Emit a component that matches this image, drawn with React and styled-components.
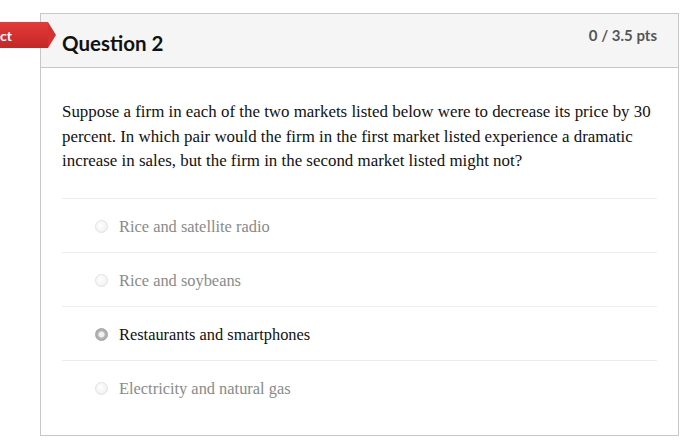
import styled, { createGlobalStyle } from "styled-components";

const Global = createGlobalStyle`
  body {
    margin: 0;
    background: #fff;
  }
`;

const Page = styled.div`
  position: relative;
  width: 700px;
  height: 440px;
  overflow: hidden;
  padding: 13px 0 0 40px;
  box-sizing: border-box;
`;

const Card = styled.div`
  width: 639px;
  border: 1px solid #c7c7c7;
  box-sizing: border-box;
  background: #fff;
`;

const Header = styled.div`
  display: flex;
  justify-content: space-between;
  align-items: flex-start;
  height: 54px;
  box-sizing: border-box;
  padding: 0 21px;
  background: #f5f5f5;
  border-bottom: 1px solid #c7c7c7;
  font-family: Lato, "Open Sans", sans-serif;
`;

const Title = styled.h2`
  margin: 17px 0 0;
  font-size: 20.5px;
  font-weight: 700;
  color: #111;
`;

const Points = styled.div`
  margin-top: 12px;
  font-size: 15px;
  font-weight: 700;
  color: #555;
`;

const Tag = styled.div`
  position: absolute;
  left: -60px;
  top: 22px;
  height: 26px;
  width: 108px;
  padding-right: 36px;
  box-sizing: border-box;
  display: flex;
  align-items: center;
  justify-content: flex-end;
  background: linear-gradient(#e23b3b, #c52626);
  color: #fff;
  font-family: Lato, "Open Sans", sans-serif;
  font-weight: 700;
  font-size: 14px;

  &::after {
    content: "";
    position: absolute;
    right: -8px;
    top: 0;
    border-top: 13px solid transparent;
    border-bottom: 13px solid transparent;
    border-left: 8px solid #d53131;
  }
`;

const Body = styled.div`
  padding: 32px 21px 21px;
  font-family: "Liberation Serif", "Times New Roman", serif;
`;

const Question = styled.p`
  margin: 0 0 24px;
  font-size: 16.9px;
  line-height: 24.5px;
  color: #111;
`;

const Answers = styled.div`
  display: flex;
  flex-direction: column;
`;

const Answer = styled.label`
  display: flex;
  align-items: center;
  height: 54px;
  padding: 3px 0 0 33px;
  border-top: 1px solid #ececec;
  box-sizing: border-box;
  font-size: 16.4px;
  color: ${(p) => (p.$selected ? "#111" : "#8a8a8a")};
`;

const Radio = styled.span`
  width: 13px;
  height: 13px;
  border-radius: 50%;
  margin-right: 11px;
  box-sizing: border-box;
  flex: none;
  background: ${(p) =>
    p.$selected
      ? "radial-gradient(circle, #f0f0f0 0 2.5px, #b8b8b8 3.5px, #9c9c9c 100%)"
      : "radial-gradient(circle at 40% 40%, #fff, #ececec)"};
  border: 1px solid ${(p) => (p.$selected ? "#a5a5a5" : "#e2e2e2")};
`;

const answers = [
  "Rice and satellite radio",
  "Rice and soybeans",
  "Restaurants and smartphones",
  "Electricity and natural gas",
];

export default function App() {
  return (
    <Page>
      <Global />
      <Tag>Incorrect</Tag>
      <Card>
        <Header>
          <Title>Question 2</Title>
          <Points>0 / 3.5 pts</Points>
        </Header>
        <Body>
          <Question>
            Suppose a firm in each of the two markets listed below were to
            decrease its price by 30 percent. In which pair would the firm in
            the first market listed experience a dramatic increase in sales, but
            the firm in the second market listed might not?
          </Question>
          <Answers>
            {answers.map((a, i) => (
              <Answer key={a} $selected={i === 2}>
                <Radio $selected={i === 2} />
                {a}
              </Answer>
            ))}
          </Answers>
        </Body>
      </Card>
    </Page>
  );
}
